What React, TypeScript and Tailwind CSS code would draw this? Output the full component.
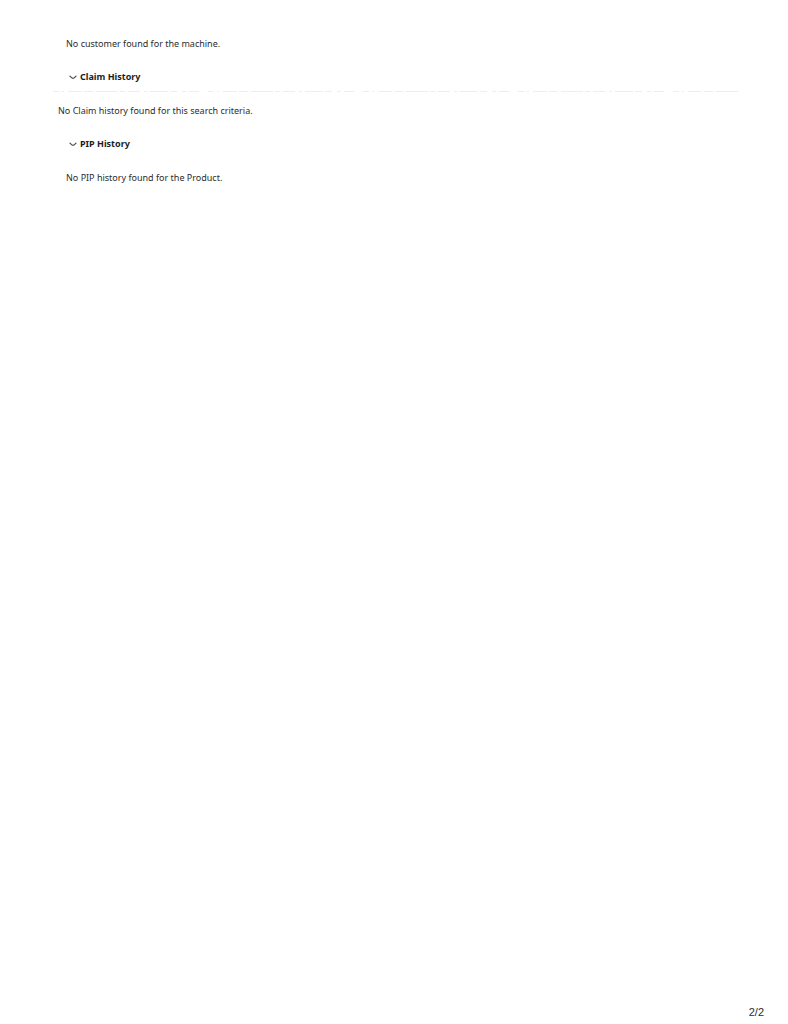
import { useState, type ReactNode } from "react";

function Chevron({ open }: { open: boolean }) {
  return (
    <svg
      viewBox="0 0 8 6"
      className={open ? "h-1.5 w-2 shrink-0" : "h-1.5 w-2 shrink-0 -rotate-90"}
      fill="none"
      stroke="#505050"
      strokeWidth="1.3"
      strokeLinecap="round"
      strokeLinejoin="round"
      aria-hidden="true"
    >
      <path d="M1 2.2 Q2.8 4.4 4 4.4 Q5.2 4.4 7 2.2" />
    </svg>
  );
}

function Section({ title, divided, children }: { title: string; divided?: boolean; children: ReactNode }) {
  const [open, setOpen] = useState(true);
  return (
    <section>
      <h2 className="flex pl-4">
        <button
          type="button"
          aria-expanded={open}
          onClick={() => setOpen(!open)}
          className="flex items-center gap-[3px] font-bold text-[#1c1c1c]"
        >
          <Chevron open={open} />
          {title}
        </button>
      </h2>
      {divided && (
        <svg className="mt-2 -mb-[9px] block h-px w-full" aria-hidden="true">
          <line
            x1="0"
            y1="0.5"
            x2="100%"
            y2="0.5"
            stroke="#eeeeee"
            strokeDasharray="6 3 2 4 14 2 9 3 22 2 5 3 12 4 3 3 18 2 7 5 4 3 10 9"
          />
        </svg>
      )}
      {open && <div className="mt-[22px]">{children}</div>}
    </section>
  );
}

export default function App() {
  return (
    <div className="flex min-h-screen flex-col bg-white font-['Noto_Sans',sans-serif] text-[9px] leading-3 text-[#2c2c2c]">
      <main className="flex grow flex-col gap-[21px] pt-[38px] pr-12 pl-[53px]">
        <p className="pl-[13px]">No customer found for the machine.</p>
        <Section title="Claim History" divided>
          <p className="pl-[5px]">No Claim history found for this search criteria.</p>
        </Section>
        <Section title="PIP History">
          <p className="pl-[13px]">No PIP history found for the Product.</p>
        </Section>
      </main>
      <footer className="flex justify-end pr-6 pb-1 font-['Liberation_Sans',Arial,sans-serif] text-[11px] leading-4">
        2/2
      </footer>
    </div>
  );
}
